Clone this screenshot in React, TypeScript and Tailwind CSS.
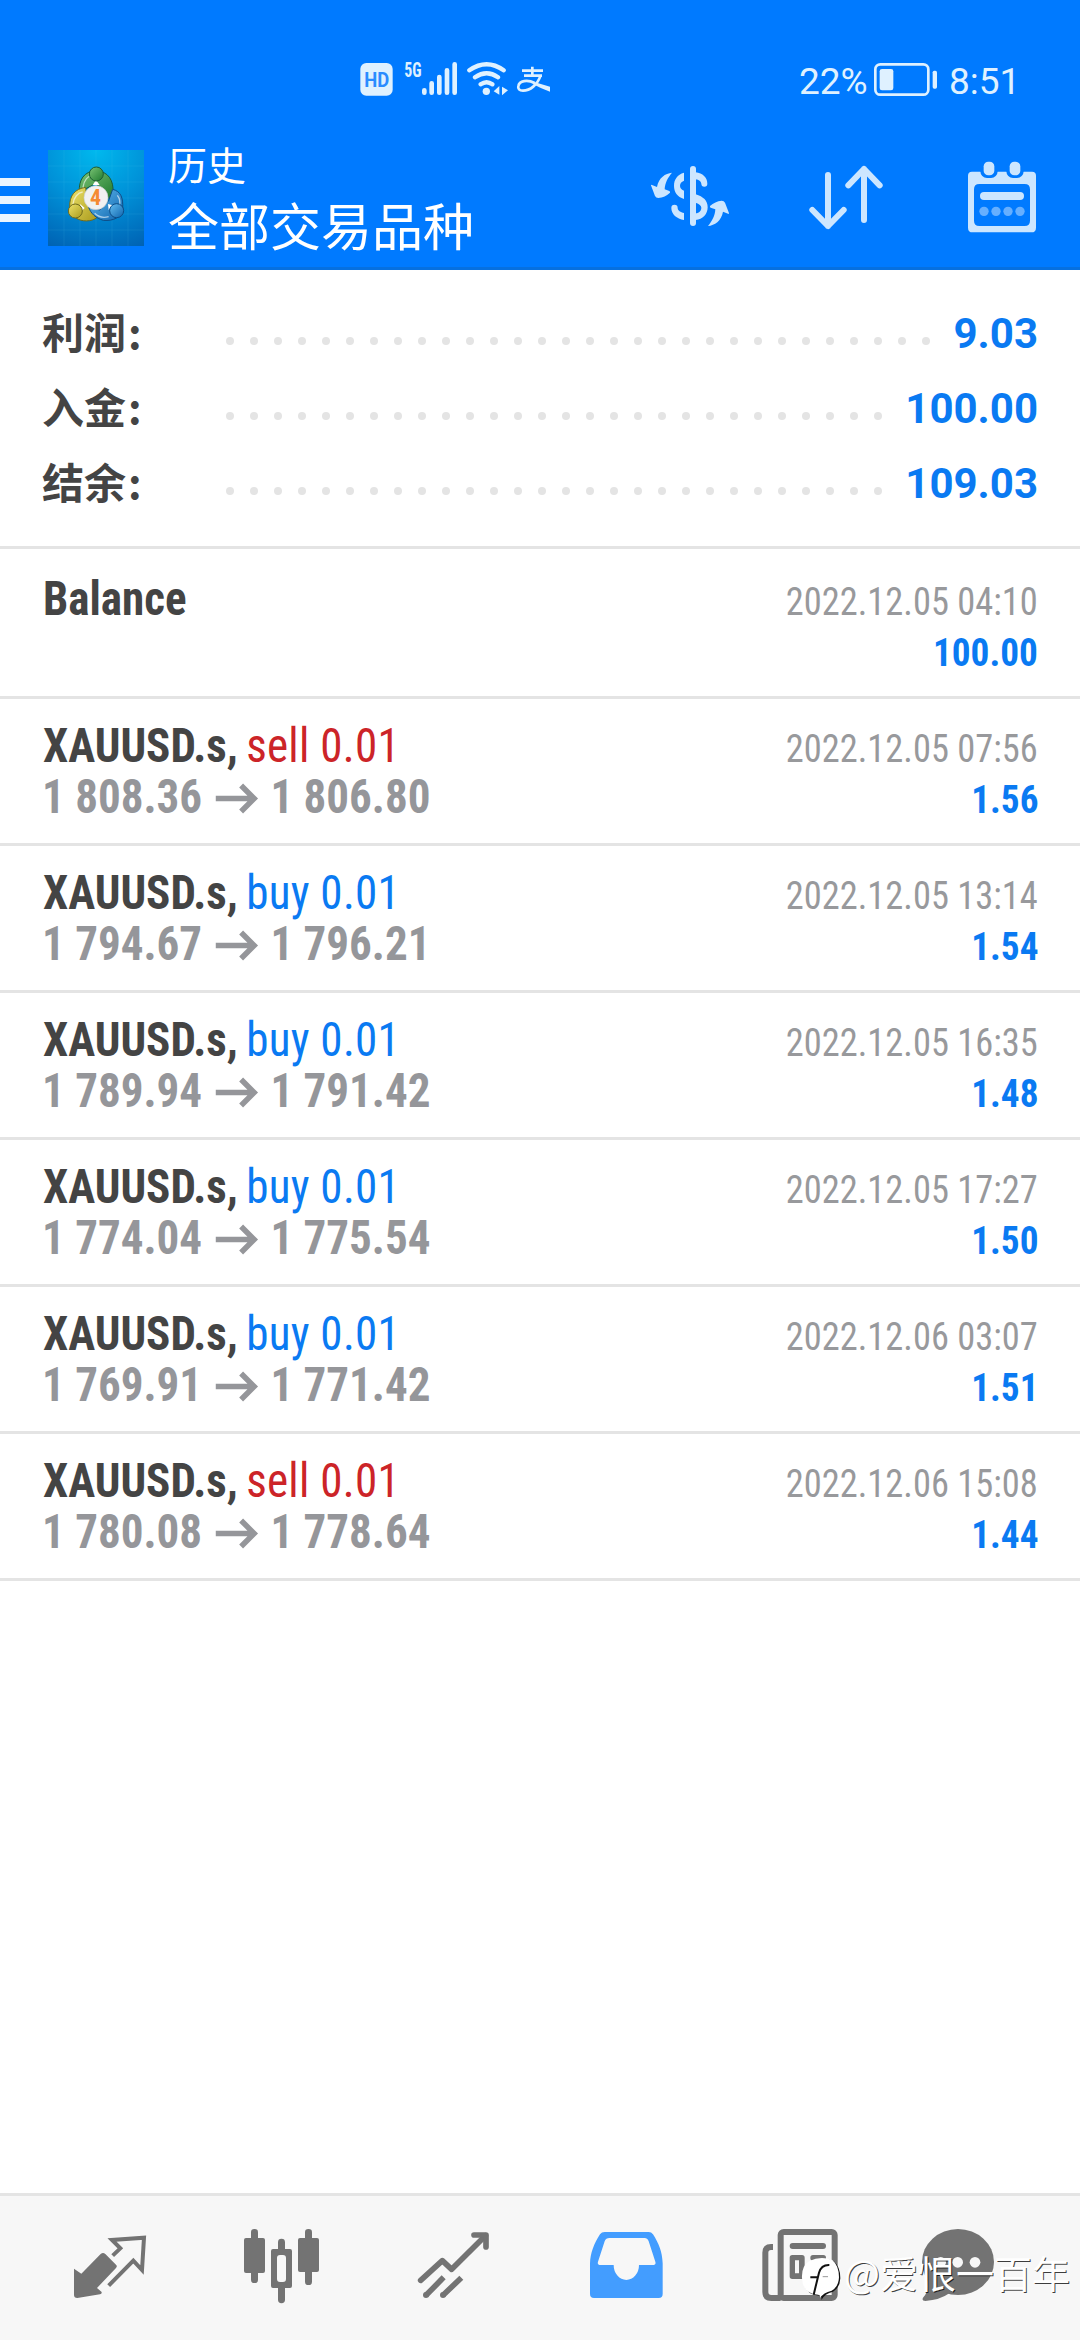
type Deal = {
  symbol: string;
  side?: 'buy' | 'sell';
  volume?: string;
  open?: string;
  close?: string;
  time: string;
  profit: string;
};

const summary = [
  { label: '利润', value: '9.03', dots: 30 },
  { label: '入金', value: '100.00', dots: 28 },
  { label: '结余', value: '109.03', dots: 28 },
];

const deals: Deal[] = [
  { symbol: 'Balance', time: '2022.12.05 04:10', profit: '100.00' },
  { symbol: 'XAUUSD.s', side: 'sell', volume: '0.01', open: '1 808.36', close: '1 806.80', time: '2022.12.05 07:56', profit: '1.56' },
  { symbol: 'XAUUSD.s', side: 'buy', volume: '0.01', open: '1 794.67', close: '1 796.21', time: '2022.12.05 13:14', profit: '1.54' },
  { symbol: 'XAUUSD.s', side: 'buy', volume: '0.01', open: '1 789.94', close: '1 791.42', time: '2022.12.05 16:35', profit: '1.48' },
  { symbol: 'XAUUSD.s', side: 'buy', volume: '0.01', open: '1 774.04', close: '1 775.54', time: '2022.12.05 17:27', profit: '1.50' },
  { symbol: 'XAUUSD.s', side: 'buy', volume: '0.01', open: '1 769.91', close: '1 771.42', time: '2022.12.06 03:07', profit: '1.51' },
  { symbol: 'XAUUSD.s', side: 'sell', volume: '0.01', open: '1 780.08', close: '1 778.64', time: '2022.12.06 15:08', profit: '1.44' },
];

function StatusBar() {
  return (
    <div className="flex h-[129px] items-start pl-[360px] pt-[60px] text-[#dff1ff]">
      <svg className="overflow-visible" width="34" height="38" viewBox="60 60 102 114" fill="currentColor">
        <rect x="61" y="69" width="97" height="98" rx="18" />
        <text x="73" y="141" fontSize="59" fontWeight="700" textLength="75" lengthAdjust="spacingAndGlyphs" fill="#2a8cff" className="font-['Roboto',sans-serif]">HD</text>
      </svg>
      <svg className="ml-[10px] overflow-visible" width="54" height="38" viewBox="192 60 162 114" fill="none" stroke="currentColor" strokeWidth="14" strokeLinecap="round">
        <text x="193" y="110" fontSize="60" fontWeight="700" textLength="52" lengthAdjust="spacingAndGlyphs" fill="currentColor" stroke="none" className="font-['Roboto_Condensed','Roboto',sans-serif]">5G</text>
        <path d="M253 151V158M275 130V158M298 111V158M321 91V158M344 73V158" />
      </svg>
      <svg className="ml-[9px]" width="42" height="38" viewBox="381 60 126 114" fill="none" stroke="currentColor" strokeWidth="13" strokeLinecap="round">
        <path d="M388 91Q440 55 491 91M405 112Q440 88 474 112M422 133Q440 120 457 133" />
        <circle cx="439" cy="154" r="11" fill="currentColor" stroke="none" />
        <path d="M478 138V164L461 154ZM486 140V166L504 151Z" fill="currentColor" stroke="none" />
      </svg>
      <svg className="ml-[7px]" width="35" height="38" viewBox="528 60 105 114" fill="none" stroke="currentColor" strokeWidth="8">
        <path d="M577 80V104M546 92H609M552 107H606" />
        <path d="M602 106C592 135 570 152 549 152C538 152 533 146 535 138C538 122 562 118 584 129" />
        <path d="M580 125L630 140V155Q604 146 578 132Z" fill="currentColor" stroke="none" />
      </svg>
      <span className="ml-[248px] w-[74px] font-['Roboto',sans-serif] text-[37px] leading-[44px]">22%</span>
      <svg width="66" height="38" viewBox="279 60 198 114">
        <rect x="286" y="73" width="159" height="91" rx="15" fill="none" stroke="currentColor" strokeWidth="8" />
        <rect x="299" y="87" width="41" height="64" rx="7" fill="currentColor" />
        <rect x="458" y="92" width="13" height="54" rx="5" fill="currentColor" />
      </svg>
      <span className="ml-[10px] font-['Roboto',sans-serif] text-[37px] leading-[44px]">8:51</span>
    </div>
  );
}

function AppLogo() {
  return (
    <svg className="ml-[18px] shrink-0" width="96" height="96" viewBox="144 60 288 288">
      <defs>
        <radialGradient id="sky" cx="0.5" cy="0" r="1.1">
          <stop offset="0" stopColor="#00b9ee" />
          <stop offset="0.5" stopColor="#0091d8" />
          <stop offset="1" stopColor="#0063b4" />
        </radialGradient>
        <linearGradient id="green" x1="0" y1="0" x2="1" y2="1">
          <stop offset="0" stopColor="#7cc576" />
          <stop offset="1" stopColor="#1f7a2e" />
        </linearGradient>
        <linearGradient id="yellow" x1="0" y1="0" x2="1" y2="1">
          <stop offset="0" stopColor="#eee36a" />
          <stop offset="1" stopColor="#a99a1c" />
        </linearGradient>
        <linearGradient id="blue" x1="0" y1="0" x2="1" y2="1">
          <stop offset="0" stopColor="#63bdf0" />
          <stop offset="1" stopColor="#0f64ae" />
        </linearGradient>
      </defs>
      <rect x="144" y="60" width="288" height="288" fill="url(#sky)" />
      <path
        d="M192 60V348M240 60V348M288 60V348M336 60V348M384 60V348M144 108H432M144 156H432M144 204H432M144 252H432M144 300H432"
        stroke="#5cc8f5"
        strokeOpacity="0.18"
        strokeWidth="2"
      />
      <g strokeLinejoin="round">
        <path d="M238 185C236 150 252 124 288 122C324 124 342 150 339 190L326 205L288 160L250 180Z" fill="url(#green)" stroke="#1d5c33" strokeWidth="3" />
        <path d="M209 232C208 195 225 177 257 172L262 215L292 262C275 276 245 276 228 264Z" fill="url(#yellow)" stroke="#6f6a1c" strokeWidth="3" />
        <path d="M338 178C362 184 370 202 368 236C364 262 340 274 310 271C288 265 272 250 266 232L300 240L326 212Z" fill="url(#blue)" stroke="#0d4c86" strokeWidth="3" />
        <path d="M249 172C252 150 264 138 276 136M219 222C221 202 234 188 248 186M352 196C360 206 361 218 358 228M284 250C296 262 312 264 326 260" fill="none" stroke="#fff" strokeOpacity="0.6" strokeWidth="4" />
        <path d="M278 165L288 150L299 165ZM240 222L254 234L244 244ZM324 222L338 226L326 240Z" fill="#fff" />
      </g>
      <circle cx="289" cy="132" r="21" fill="url(#green)" stroke="#1d5c33" strokeWidth="3" />
      <circle cx="226" cy="243" r="21" fill="url(#yellow)" stroke="#6f6a1c" strokeWidth="3" />
      <circle cx="350" cy="242" r="21" fill="url(#blue)" stroke="#0d4c86" strokeWidth="3" />
      <circle cx="288" cy="203" r="36" fill="#f1f1f1" stroke="#c9cfd2" strokeWidth="2" />
      <text x="287" y="226" fontSize="66" fontWeight="700" textAnchor="middle" fill="#f58a33" className="font-['Roboto_Condensed','Roboto',sans-serif]">4</text>
    </svg>
  );
}

function CurrencyIcon() {
  return (
    <svg width="80" height="68" viewBox="60 72 240 204" fill="currentColor">
      <rect x="180" y="78" width="18" height="180" rx="9" />
      <path d="M162 98C142 104 132 118 132 137C132 156 142 170 162 177V152C153 148 150 143 150 137C150 130 154 125 162 122Z" />
      <path d="M124 204A9.500 9.500 0 0 1 143 204C143 212 152 217 162 219V240C140 237 124 222 124 204Z" />
      <path d="M197 97C218 100 232 112 232 131A9 9 0 0 1 214 131C213 125 207 119 197 118Z" />
      <path d="M197 163C220 170 233 182 233 202C233 223 218 238 197 240V220C208 219 214 212 214 203C214 197 208 191 197 188Z" />
      <path d="M126 98C106 100 86 113 81 141L64 134Q62 136 64 139L75 168Q78 174 85 174Q105 172 120 158Q121 155 118 153L104 148C105 128 114 112 126 98Z" />
      <path transform="rotate(180 180 178)" d="M126 98C106 100 86 113 81 141L64 134Q62 136 64 139L75 168Q78 174 85 174Q105 172 120 158Q121 155 118 153L104 148C105 128 114 112 126 98Z" />
    </svg>
  );
}

function SortIcon() {
  return (
    <svg width="76" height="68" viewBox="534 72 228 204" fill="none" stroke="currentColor" strokeWidth="18" strokeLinecap="round" strokeLinejoin="round">
      <path d="M594 105V258M547 210L594 258L641 210M702 240V87M655 136L702 87L749 136" />
    </svg>
  );
}

function CalendarIcon() {
  return (
    <svg width="72" height="76" viewBox="1008 60 216 228">
      <path
        fill="currentColor"
        fillRule="evenodd"
        d="M1026 95H1206Q1218 95 1218 107V263Q1218 277 1204 277H1028Q1014 277 1014 263V107Q1014 95 1026 95ZM1048 132Q1032 132 1032 148V242Q1032 258 1048 258H1184Q1200 258 1200 242V148Q1200 132 1184 132Z"
      />
      <rect x="1051" y="54" width="52" height="60" rx="20" fill="#007aff" />
      <rect x="1129" y="54" width="52" height="60" rx="20" fill="#007aff" />
      <g fill="currentColor">
        <rect x="1061" y="65" width="32" height="41" rx="14" />
        <rect x="1139" y="65" width="32" height="41" rx="14" />
        <rect x="1050" y="156" width="132" height="24" rx="12" />
      </g>
      <g fill="#66afff">
        <circle cx="1062" cy="214" r="14" />
        <circle cx="1098" cy="214" r="14" />
        <circle cx="1134" cy="214" r="14" />
        <circle cx="1170" cy="214" r="14" />
      </g>
    </svg>
  );
}

function Toolbar() {
  return (
    <div className="flex h-[138px] items-center pr-[42px]">
      <div className="flex w-[30px] flex-col gap-[10px] pt-1">
        <div className="h-2 bg-[#ebf5ff]" />
        <div className="h-2 bg-[#ebf5ff]" />
        <div className="h-2 bg-[#ebf5ff]" />
      </div>
      <AppLogo />
      <div className="ml-6 flex flex-col pt-[3px] font-['Noto_Sans_CJK_SC',sans-serif] text-white">
        <span className="text-[39px] leading-[49px]">历史</span>
        <span className="text-[51px] leading-[72px]">全部交易品种</span>
      </div>
      <div className="ml-auto flex items-center text-[#cce6ff]">
        <CurrencyIcon />
        <div className="ml-[78px]"><SortIcon /></div>
        <div className="ml-[82px]"><CalendarIcon /></div>
      </div>
    </div>
  );
}

function Summary() {
  return (
    <section className="border-b-[3px] border-[#e4e4e4] pb-[25px] pl-[42px] pr-[42px] pt-[26px]">
      {summary.map((row) => (
        <div key={row.label} className="flex h-[75px] items-start font-bold">
          <span className="w-[184px] font-['Noto_Sans_CJK_SC',sans-serif] text-[42px] leading-[69px] text-[#444]">
            {row.label}<span className="ml-0.5">:</span>
          </span>
          <div className="mt-[41px] flex gap-4">
            {Array.from({ length: row.dots }, (_, i) => (
              <span key={i} className="size-2 rounded-full bg-[#e4e4e4]" />
            ))}
          </div>
          <span className="ml-auto font-['Roboto',sans-serif] text-[42px] leading-[75px] text-[#0a7af2]">{row.value}</span>
        </div>
      ))}
    </section>
  );
}

function DealRow({ deal }: { deal: Deal }) {
  return (
    <div className={`border-b-[3px] border-[#e4e4e4] pb-[21px] pl-[42px] pr-[42px] font-['Roboto_Condensed','Roboto',sans-serif] ${deal.side ? 'pt-[21px]' : 'pt-6'}`}>
      <div className="flex h-[51px] items-start justify-between">
        <div className="ml-px flex origin-left scale-x-[0.938] text-[48px] leading-[51px]">
          <span className="font-bold text-[#444]">{deal.symbol}{deal.side && ','}</span>
          {deal.side && (
            <span className={`ml-[9px] tracking-[0.3px] ${deal.side === 'sell' ? 'text-[#cc2428]' : 'text-[#0a7af2]'}`}>{deal.side} {deal.volume}</span>
          )}
        </div>
        <span className="origin-right scale-x-[0.934] text-[39px] leading-[58px] text-[#98999c]">{deal.time}</span>
      </div>
      <div className="flex h-[51px] items-start">
        {deal.open && (
          <div className="flex origin-left scale-x-[0.938] text-[48px] font-bold leading-[51px] text-[#95969a]">
            <span>{deal.open}</span>
            <svg className="ml-[14px] mr-[13px] mt-[10px]" width="46" height="36" viewBox="0 0 43 36" preserveAspectRatio="none" fill="none" stroke="currentColor" strokeWidth="5.500">
              <path d="M0 17.500H38M25.500 4.500L38.500 17.500L25.500 30.500" />
            </svg>
            <span>{deal.close}</span>
          </div>
        )}
        <span className="ml-auto origin-right scale-x-[0.955] text-[39px] font-bold leading-[58px] text-[#0a7af2]">{deal.profit}</span>
      </div>
    </div>
  );
}

function BottomNav() {
  return (
    <nav className="flex h-[147px] items-start border-t-[3px] border-[#e4e4e4] bg-[#f7f7f7] pl-[70px] pt-[14px] text-[#737373]">
      {/* Quotes */}
      <svg width="80" height="110" viewBox="30 0 240 330" fill="currentColor">
        <path d="M42 176L64 191L122 132Q129 126 136 132L168 164Q173 169 168 174L111 234L125 246Q126 252 120 253L52 264Q42 264 42 255Z" />
        <path d="M158 137L181 115L156 90L252 83L246 180L220 152L146 227" fill="none" stroke="currentColor" strokeWidth="12" />
      </svg>
      {/* Chart */}
      <svg className="ml-[90px]" width="84" height="110" viewBox="540 0 252 330" fill="currentColor">
        <rect x="552" y="84" width="63" height="105" rx="6" />
        <rect x="573" y="57" width="21" height="162" rx="10" />
        <path fillRule="evenodd" d="M639 117H690Q696 117 696 123V228Q696 234 690 234H639Q633 234 633 228V123Q633 117 639 117ZM660 135Q651 135 651 144V207Q651 216 660 216H669Q678 216 678 207V144Q678 135 669 135Z" />
        <path d="M654 120V97A10.500 10.500 0 0 1 675 97V120ZM654 230V269A10.500 10.500 0 0 0 675 269V230Z" />
        <rect x="714" y="84" width="63" height="102" rx="6" />
        <rect x="735" y="57" width="21" height="168" rx="10" />
      </svg>
      {/* Trade */}
      <svg className="ml-[90px]" width="80" height="110" viewBox="1062 0 240 330" fill="none" stroke="currentColor" strokeWidth="17">
        <path d="M1082 211L1147 152L1175 178L1276 77" strokeLinecap="round" strokeLinejoin="round" />
        <path d="M1242 75H1278V111" strokeLinecap="round" strokeLinejoin="round" />
        <path d="M1098 256L1151 202M1149 256L1204 203" />
        <circle cx="1098" cy="255" r="9" fill="currentColor" stroke="none" />
        <circle cx="1149" cy="255" r="9" fill="currentColor" stroke="none" />
      </svg>
      {/* History */}
      <svg className="ml-[92px]" width="80" height="110" viewBox="18 0 240 330" fill="#439dff">
        <path
          fillRule="evenodd"
          d="M74 66H206Q214 66 219 73C236 100 247 125 248 160V252Q248 264 236 264H42Q30 264 30 252V160C31 130 42 100 60 73Q65 66 74 66ZM88 84Q78 84 74 94L54 155Q51 165 62 165H101A38 45 0 0 0 177 165H218Q229 165 226 155L206 94Q202 84 194 84Z"
        />
      </svg>
      {/* News */}
      <svg className="ml-[92px]" width="84" height="110" viewBox="534 0 252 330" fill="none" stroke="currentColor" strokeWidth="18">
        <rect x="602" y="66" width="162" height="198" rx="9" />
        <path d="M579 111H573Q556 111 556 128V246Q556 264 574 264H602" />
        <g fill="currentColor" stroke="none">
          <rect x="629" y="99" width="109" height="18" rx="9" />
          <rect x="691" y="135" width="47" height="17" rx="8" />
          <path fillRule="evenodd" d="M637 135H666Q674 135 674 143V199Q674 207 666 207H637Q629 207 629 199V143Q629 135 637 135ZM645 151V190H657V151Z" />
        </g>
      </svg>
      {/* Messages */}
      <svg className="ml-[76px]" width="80" height="110" viewBox="1014 0 240 330" fill="currentColor">
        <ellipse cx="1134" cy="156" rx="108" ry="99" />
        <path d="M1038 200Q1052 240 1029 263Q1024 273 1036 273Q1080 270 1108 250Z" />
        <g fill="#f7f7f7">
          <circle cx="1082" cy="157" r="16" />
          <circle cx="1133" cy="157" r="16" />
          <circle cx="1185" cy="157" r="16" />
        </g>
      </svg>
    </nav>
  );
}

function Watermark() {
  return (
    <div className="absolute bottom-[38px] right-[10px] flex items-center">
      <svg className="mr-0.5 mt-[15px]" width="42" height="46" viewBox="660 146 126 138">
        <path transform="translate(4 3)" d="M688 161Q722 145 757 158Q777 175 777 210Q776 238 755 250Q730 256 720 275Q722 262 714 262Q668 260 666 212Q664 176 688 161Z" fill="#111" />
        <path d="M688 161Q722 145 757 158Q777 175 777 210Q776 238 755 250Q730 256 720 272Q722 262 714 262Q668 260 666 212Q664 176 688 161Z" fill="#fff" />
        <path d="M748 173Q724 172 717 196L701 262M691 210H712" fill="none" stroke="#111" strokeWidth="6" />
        <path d="M728 208H744" stroke="#999" strokeWidth="3" />
      </svg>
      <span className="font-['Noto_Sans_CJK_SC',sans-serif] text-[38px] leading-[56px] text-white [text-shadow:1px_1px_0_rgba(0,0,0,0.75)]">@爱恨一百年</span>
    </div>
  );
}

export default function App() {
  return (
    <div className="relative flex h-[2340px] w-[1080px] flex-col overflow-hidden bg-white">
      <header className="border-b-[3px] border-[#0670e0] bg-[#007aff]">
        <StatusBar />
        <Toolbar />
      </header>
      <Summary />
      <main className="flex-1">
        {deals.map((deal) => (
          <DealRow key={deal.time} deal={deal} />
        ))}
      </main>
      <BottomNav />
      <Watermark />
    </div>
  );
}
